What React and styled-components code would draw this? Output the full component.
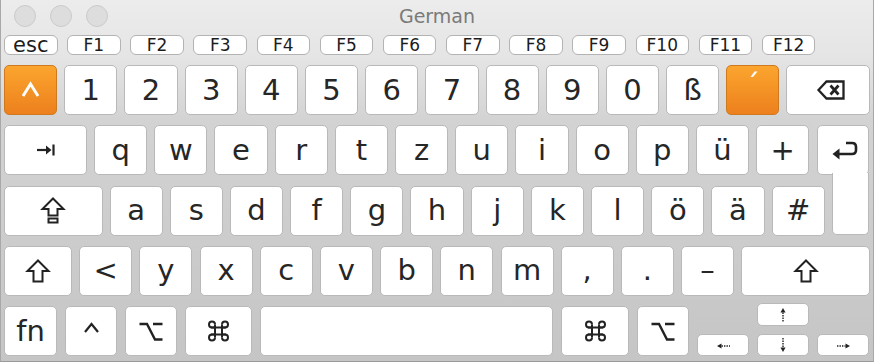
import styled, { createGlobalStyle } from "styled-components";

const GlobalStyle = createGlobalStyle`
  html, body {
    margin: 0;
    padding: 0;
    background: #c6c6c6;
  }
  body {
    font-family: "DejaVu Sans", "Liberation Sans", sans-serif;
  }
`;

const Window = styled.div`
  width: 874px;
  height: 362px;
  box-sizing: border-box;
  border-left: 1px solid #a8a8a8;
  border-right: 1px solid #a8a8a8;
  border-bottom: 1px solid #9a9a9a;
  background: linear-gradient(#ececec 0px, #e5e5e5 56px, #d3d3d3 120px, #c5c5c5 362px);
  display: flex;
  flex-direction: column;
  overflow: hidden;
`;

const TitleBar = styled.div`
  height: 30px;
  display: grid;
  grid-template-columns: 1fr auto 1fr;
  align-items: center;
`;

const Lights = styled.div`
  display: flex;
  gap: 14px;
  padding-left: 13px;
  padding-top: 2px;
`;

const Light = styled.span`
  width: 20px;
  height: 20px;
  border-radius: 50%;
  background: #dddddd;
  border: 1px solid #cbcbcb;
`;

const Title = styled.div`
  font-size: 19px;
  color: #7a7a7a;
  padding-top: 1px;
`;

const Board = styled.div`
  display: flex;
  flex-direction: column;
  gap: 10.25px;
  padding: 5px 3px 0 3px;
`;

const FRow = styled.div`
  display: flex;
  gap: 9.67px;
  height: 20px;
  margin-bottom: -0.25px;
`;

const Row = styled.div`
  display: flex;
  gap: ${(p) => p.$gap || 7}px;
  height: 50px;
  margin-right: ${(p) => p.$overhang || 0}px;
`;

const Key = styled.div`
  box-sizing: border-box;
  width: ${(p) => (p.$w ? `${p.$w}px` : "auto")};
  flex: ${(p) => (p.$grow ? "1" : "none")};
  height: ${(p) => (p.$h ? `${p.$h}px` : "100%")};
  border: 1px solid ${(p) => (p.$orange ? "#cf7a1f" : "#b9b9b9")};
  border-radius: 5px;
  background: ${(p) =>
    p.$orange ? "linear-gradient(#fba52e, #ec801d)" : "#ffffff"};
  color: ${(p) => (p.$orange ? "#ffffff" : "#262626")};
  font-size: ${(p) => p.$size || 29}px;
  display: flex;
  align-items: center;
  justify-content: center;
  line-height: 1;
`;

const FKey = styled(Key)`
  width: 53.5px;
  height: 20px;
  border-radius: 6px;
  font-size: ${(p) => p.$size || 17}px;
  border-color: #b3b3b3;
  color: #1c1c1c;
  padding-top: 1px;
`;

const Accent = styled.span`
  margin-top: -10px;
`;

const Split = styled.div`
  display: flex;
  gap: 7.6px;
`;

const Left = styled.div`
  display: flex;
  flex-direction: column;
  gap: 10.25px;
`;

const ReturnKey = styled.div`
  width: 52px;
  display: flex;
  flex-direction: column;
`;

const ReturnTop = styled.div`
  box-sizing: border-box;
  height: 50px;
  border: 1px solid #b9b9b9;
  border-radius: 5px;
  background: #fff;
  display: flex;
  align-items: center;
  justify-content: center;
  padding-left: 4px;
`;

const ReturnBottom = styled.div`
  box-sizing: border-box;
  height: 62px;
  margin-top: -2px;
  margin-left: 15px;
  border: 1px solid #b9b9b9;
  border-top: none;
  border-radius: 0 0 5px 5px;
  background: #fff;
`;

const Arrows = styled.div`
  width: 172px;
  margin-top: -3px;
  display: grid;
  grid-template-columns: 52px 52px 52px;
  grid-template-rows: 23px 22px;
  column-gap: 8px;
  row-gap: 8px;
`;

const ArrowKey = styled(Key)`
  width: 52px;
  height: 100%;
  grid-column: ${(p) => p.$col};
  grid-row: ${(p) => p.$row};
  align-items: ${(p) => (p.$low ? "flex-end" : "center")};
  padding-bottom: ${(p) => (p.$low ? "6px" : "0")};
`;

const Nudge = styled.span`
  display: block;
  margin-top: ${(p) => p.$top || 0}px;
  margin-left: ${(p) => p.$left || 0}px;
`;

const Ico = styled.svg`
  display: block;
  overflow: visible;
`;

const dark = "#222";

const TabIcon = () => (
  <Ico width="18" height="12" viewBox="0 0 18 12">
    <path d="M0 6 H10" stroke={dark} strokeWidth="2.2" />
    <path d="M9 1.5 L14.5 6 L9 10.5 Z" fill={dark} />
    <path d="M16.5 0.5 V11.5" stroke={dark} strokeWidth="2.2" />
  </Ico>
);

const CapsIcon = () => (
  <Ico width="24" height="27" viewBox="0 0 24 27">
    <path
      d="M12 1.5 L22.5 12 H16.5 V18.5 H7.5 V12 H1.5 Z"
      fill="none"
      stroke={dark}
      strokeWidth="2"
    />
    <rect x="7.5" y="21.5" width="9" height="4" fill="none" stroke={dark} strokeWidth="2" />
  </Ico>
);

const ShiftIcon = () => (
  <Ico width="24" height="24" viewBox="0 0 24 24">
    <path
      d="M12 1.5 L22.5 12 H16.5 V22.5 H7.5 V12 H1.5 Z"
      fill="none"
      stroke={dark}
      strokeWidth="2"
    />
  </Ico>
);

const ReturnIcon = () => (
  <Ico width="26" height="18" viewBox="0 0 26 18">
    <path
      d="M14 2 H20 Q24 2 24 6 V9 Q24 13 20 13 H7"
      fill="none"
      stroke={dark}
      strokeWidth="2.6"
    />
    <path d="M0.5 13 L7.5 7.5 V18.5 Z" fill={dark} />
  </Ico>
);

const DeleteIcon = () => (
  <Ico width="28" height="20" viewBox="0 0 28 20">
    <path d="M1.5 10 L9.5 1.5 H26.5 V18.5 H9.5 Z" fill="none" stroke={dark} strokeWidth="2.3" />
    <path d="M13.5 5.5 L21.5 14.5 M21.5 5.5 L13.5 14.5" stroke={dark} strokeWidth="2.7" />
  </Ico>
);

const CaretIcon = ({ color = dark, w = 15, h = 10, sw = 2.2 }) => (
  <Ico width={w} height={h} viewBox={`0 0 ${w} ${h}`}>
    <path
      d={`M1 ${h - 1} L${w / 2} 1 L${w - 1} ${h - 1}`}
      fill="none"
      stroke={color}
      strokeWidth={sw}
    />
  </Ico>
);

const OptionIcon = () => (
  <Ico width="24" height="19" viewBox="0 0 24 19">
    <path d="M0.5 2 H8 L16 17.5 H23.5 M14 2 H23.5" fill="none" stroke={dark} strokeWidth="2.4" />
  </Ico>
);

const CommandIcon = () => (
  <Ico width="23" height="22" viewBox="0 0 23 22">
    <g fill="none" stroke={dark} strokeWidth="2">
      <path d="M8 4.5 V17.5 M15 4.5 V17.5 M4 7.5 H19 M4 14.5 H19" />
      <path d="M8 7.5 H5 A3 3 0 1 1 8 4.5" />
      <path d="M15 7.5 H18 A3 3 0 1 0 15 4.5" />
      <path d="M8 14.5 H5 A3 3 0 1 0 8 17.5" />
      <path d="M15 14.5 H18 A3 3 0 1 1 15 17.5" />
    </g>
  </Ico>
);

// small dotted arrows of the cursor keys
const arrowPaths = {
  up: { w: 6, h: 14, head: "M0.5 4.5 L3 0 L5.5 4.5 Z", shaft: "M3 4.5 V14" },
  down: { w: 6, h: 14, head: "M0.5 9.5 L3 14 L5.5 9.5 Z", shaft: "M3 0 V9.5" },
  left: { w: 13, h: 6, head: "M4.5 0.5 L0 3 L4.5 5.5 Z", shaft: "M4.5 3 H13" },
  right: { w: 13, h: 6, head: "M8.5 0.5 L13 3 L8.5 5.5 Z", shaft: "M0 3 H8.5" },
};

const SmallArrow = ({ dir }) => {
  const a = arrowPaths[dir];
  return (
    <Ico width={a.w} height={a.h} viewBox={`0 0 ${a.w} ${a.h}`}>
      <path d={a.head} fill={dark} />
      <path d={a.shaft} stroke={dark} strokeWidth="1.4" strokeDasharray="1.4 1.1" />
    </Ico>
  );
};

const fKeys = ["F1", "F2", "F3", "F4", "F5", "F6", "F7", "F8", "F9", "F10", "F11", "F12"];
const numbers = ["1", "2", "3", "4", "5", "6", "7", "8", "9", "0", "ß"];
const top = ["q", "w", "e", "r", "t", "z", "u", "i", "o", "p", "ü", "+"];
const home = ["a", "s", "d", "f", "g", "h", "j", "k", "l", "ö", "ä", "#"];
const bottom = ["<", "y", "x", "c", "v", "b", "n", "m", ",", ".", "–"];

export default function App() {
  return (
    <>
      <GlobalStyle />
      <Window>
        <TitleBar>
          <Lights>
            <Light />
            <Light />
            <Light />
          </Lights>
          <Title>German</Title>
          <div />
        </TitleBar>
        <Board>
          <FRow>
            <FKey $size={21}>esc</FKey>
            {fKeys.map((k) => (
              <FKey key={k}>{k}</FKey>
            ))}
          </FRow>

          <Row>
            <Key $w={53.2} $orange>
              <CaretIcon color="#fff" w={17} h={14} sw={3} />
            </Key>
            {numbers.map((k) => (
              <Key key={k} $w={53.2}>
                {k}
              </Key>
            ))}
            <Key $w={53.2} $orange>
              <Accent>´</Accent>
            </Key>
            <Key $grow>
              <Nudge $left={6}>
                <DeleteIcon />
              </Nudge>
            </Key>
          </Row>

          <Split>
            <Left>
              <Row>
                <Key $w={83}>
                  <TabIcon />
                </Key>
                {top.map((k) => (
                  <Key key={k} $w={53.2}>
                    {k}
                  </Key>
                ))}
              </Row>
              <Row $overhang={-16}>
                <Key $w={98.5}>
                  <CapsIcon />
                </Key>
                {home.map((k) => (
                  <Key key={k} $w={53.2}>
                    {k}
                  </Key>
                ))}
              </Row>
            </Left>
            <ReturnKey>
              <ReturnTop>
                <ReturnIcon />
              </ReturnTop>
              <ReturnBottom />
            </ReturnKey>
          </Split>

          <Row $gap={7.2}>
            <Key $w={68}>
              <ShiftIcon />
            </Key>
            {bottom.map((k) => (
              <Key key={k} $w={53}>
                {k}
              </Key>
            ))}
            <Key $grow>
              <ShiftIcon />
            </Key>
          </Row>

          <Row $gap={8}>
            <Key $w={53}>fn</Key>
            <Key $w={52}>
              <Nudge $top={-6}>
                <CaretIcon />
              </Nudge>
            </Key>
            <Key $w={52}>
              <OptionIcon />
            </Key>
            <Key $w={67}>
              <CommandIcon />
            </Key>
            <Key $w={293} />
            <Key $w={68}>
              <CommandIcon />
            </Key>
            <Key $w={52}>
              <OptionIcon />
            </Key>
            <Arrows>
              <ArrowKey $col={2} $row={1}>
                <SmallArrow dir="up" />
              </ArrowKey>
              <ArrowKey $col={1} $row={2} $low>
                <SmallArrow dir="left" />
              </ArrowKey>
              <ArrowKey $col={2} $row={2}>
                <SmallArrow dir="down" />
              </ArrowKey>
              <ArrowKey $col={3} $row={2} $low>
                <SmallArrow dir="right" />
              </ArrowKey>
            </Arrows>
          </Row>
        </Board>
      </Window>
    </>
  );
}
